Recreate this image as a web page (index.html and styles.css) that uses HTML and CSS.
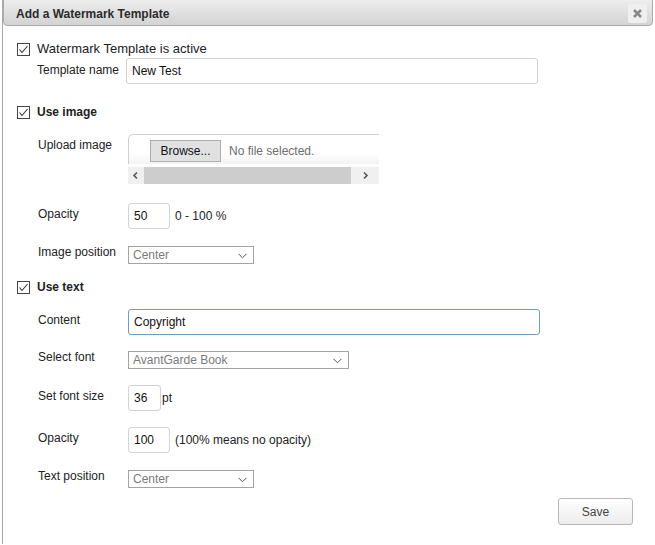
FILE: index.html
```html
<!DOCTYPE html>
<html>
<head>
<meta charset="utf-8">
<link rel="stylesheet" href="styles.css">
</head>
<body>
<div class="dialog">
  <div class="titlebar">
    <span class="title">Add a Watermark Template</span>
    <span class="close"><svg viewBox="0 0 19 19" width="19" height="19"><path d="M6 6 L13 13 M13 6 L6 13" stroke="#8a8a8a" stroke-width="2.6" stroke-linecap="butt"/></svg></span>
  </div>
  <div class="content">
    <div class="check-row first">
      <span class="cb"><svg viewBox="0 0 13 13" width="13" height="13"><path d="M2.5 6.5 L5 9.5 L10.5 3" fill="none" stroke="#333" stroke-width="1.1"/></svg></span>
      <span class="big">Watermark Template is active</span>
    </div>
    <div class="row tight">
      <span class="lbl name-lbl">Template name</span>
      <span class="input wide name-input">New Test</span>
    </div>

    <div class="check-row section">
      <span class="cb"><svg viewBox="0 0 13 13" width="13" height="13"><path d="M2.5 6.5 L5 9.5 L10.5 3" fill="none" stroke="#333" stroke-width="1.1"/></svg></span>
      <span class="bold">Use image</span>
    </div>
    <div class="row upload-row">
      <span class="lbl pad-in">Upload image</span>
      <div class="file-wrap">
        <div class="file-box">
          <span class="browse">Browse...</span>
          <span class="nofile">No file selected.</span>
        </div>
        <div class="hscroll">
          <svg class="arr" viewBox="0 0 16 17" width="16" height="17"><path d="M9 5.5 L6 8.5 L9 11.5" fill="none" stroke="#555" stroke-width="1.6"/></svg>
          <span class="thumb"></span>
          <svg class="arr right" viewBox="0 0 28 17" width="28" height="17"><path d="M13 5.5 L16 8.5 L13 11.5" fill="none" stroke="#555" stroke-width="1.6"/></svg>
        </div>
      </div>
    </div>
    <div class="row after-upload">
      <span class="lbl pad-in">Opacity</span>
      <span class="input num">50</span>
      <span class="hint">0 - 100 %</span>
    </div>
    <div class="row gap16">
      <span class="lbl">Image position</span>
      <span class="select short">Center<svg class="chev" viewBox="0 0 9 6" width="9" height="6"><path d="M0.5 0.8 L4.5 4.8 L8.5 0.8" fill="none" stroke="#555" stroke-width="1"/></svg></span>
    </div>

    <div class="check-row">
      <span class="cb"><svg viewBox="0 0 13 13" width="13" height="13"><path d="M2.5 6.5 L5 9.5 L10.5 3" fill="none" stroke="#333" stroke-width="1.1"/></svg></span>
      <span class="bold">Use text</span>
    </div>
    <div class="row">
      <span class="lbl pad-in">Content</span>
      <span class="input wide focus">Copyright</span>
    </div>
    <div class="row">
      <span class="lbl">Select font</span>
      <span class="select long">AvantGarde Book<svg class="chev" viewBox="0 0 9 6" width="9" height="6"><path d="M0.5 0.8 L4.5 4.8 L8.5 0.8" fill="none" stroke="#555" stroke-width="1"/></svg></span>
    </div>
    <div class="row gap16">
      <span class="lbl pad-in">Set font size</span>
      <span class="input small">36</span>
      <span class="hint unit">pt</span>
    </div>
    <div class="row gap16">
      <span class="lbl pad-in">Opacity</span>
      <span class="input num">100</span>
      <span class="hint">(100% means no opacity)</span>
    </div>
    <div class="row gap16">
      <span class="lbl">Text position</span>
      <span class="select short">Center<svg class="chev" viewBox="0 0 9 6" width="9" height="6"><path d="M0.5 0.8 L4.5 4.8 L8.5 0.8" fill="none" stroke="#555" stroke-width="1"/></svg></span>
    </div>
    <div class="actions">
      <span class="btn">Save</span>
    </div>
  </div>
</div>
</body>
</html>
```

FILE: styles.css
```css
html, body {
  margin: 0;
  padding: 0;
  background: #fff;
}
body {
  font-family: "Liberation Sans", Arial, sans-serif;
  font-size: 12px;
  color: #222;
}
.dialog {
  margin-left: 2px;
  width: 651px;
  height: 545px;
  border-left: 1px solid #a9a9a9;
  box-sizing: border-box;
}
.titlebar {
  height: 27px;
  box-sizing: border-box;
  margin-top: -1px;
  border: 1px solid #acacac;
  border-radius: 0 0 4px 4px;
  background: linear-gradient(#ededed, #d3d3d3);
  display: flex;
  align-items: center;
  justify-content: space-between;
  padding: 0 5px 0 12px;
}
.title {
  font-weight: bold;
  font-size: 12px;
  color: #2b2b2b;
  margin-top: 2px;
}
.close {
  width: 19px;
  height: 19px;
  box-sizing: border-box;
  border-radius: 2px;
  background: #efefef;
  display: block;
  margin-top: 1px;
}
.close svg { display: block; }
.content {
  padding: 16px 0 0 14px;
  display: flex;
  flex-direction: column;
}
.check-row {
  display: flex;
  align-items: center;
  height: 14px;
  line-height: 14px;
  margin-top: 16px;
}
.check-row.first { margin-top: 0; }
.check-row.section { margin-top: 21px; }
.big { font-size: 13px; }
.cb {
  width: 13px;
  height: 13px;
  box-sizing: border-box;
  border: 1px solid #444;
  background: #fff;
  margin-right: 7px;
  display: block;
  position: relative;
}
.cb svg {
  position: absolute;
  left: -1px;
  top: -1px;
}
.bold { font-weight: bold; }
.row {
  display: flex;
  align-items: flex-start;
  margin-top: 15px;
  line-height: 14px;
}
.row.gap16 { margin-top: 16px; }
.row.tight { margin-top: 2px; }
.row.upload-row { margin-top: 15px; }
.row.after-upload { margin-top: 19px; }
.lbl {
  width: 90px;
  padding-left: 21px;
  flex: none;
}
.lbl.name-lbl {
  padding-left: 20px;
  width: 90px;
  padding-top: 5px;
}
.lbl.pad-in { padding-top: 4px; }
.input {
  height: 26px;
  box-sizing: border-box;
  border: 1px solid #d2d2d2;
  border-radius: 3px;
  padding: 0 5px;
  display: flex;
  align-items: center;
  color: #111;
  font-size: 12px;
  background: #fff;
}
.input.wide { width: 412px; }
.input.name-input { margin-left: -1px; }
.input.focus { border-color: #6e9cc2; }
.input.num { width: 42px; }
.input.small { width: 33px; }
.hint {
  margin-left: 5px;
  padding-top: 6px;
}
.hint.unit { margin-left: 1px; }
.select {
  margin-top: 1px;
  height: 18px;
  box-sizing: border-box;
  border: 1px solid #a3a3a3;
  padding: 0 4px;
  display: flex;
  align-items: center;
  justify-content: space-between;
  color: #7a7a7a;
  background: #fff;
}
.select.short { width: 126px; }
.select.long { width: 221px; }
.chev { margin-right: 2px; margin-top: 1px; }
.file-wrap {
  width: 251px;
  display: flex;
  flex-direction: column;
}
.file-box {
  height: 30px;
  box-sizing: border-box;
  border-top: 1px solid #cfcfcf;
  border-left: 1px solid #cfcfcf;
  border-top-left-radius: 5px;
  background: linear-gradient(#fff 60%, #f3f3f3);
  display: flex;
  align-items: flex-start;
  padding: 5px 0 0 21px;
}
.browse {
  width: 71px;
  height: 22px;
  box-sizing: border-box;
  border: 1px solid #adadad;
  background: #e1e1e1;
  display: flex;
  align-items: center;
  justify-content: center;
  color: #111;
}
.nofile {
  margin-left: 8px;
  color: #6d6d6d;
  line-height: 22px;
}
.hscroll {
  margin-top: 3px;
  height: 17px;
  background: #f0f0f0;
  display: flex;
  align-items: center;
}
.arr { display: block; flex: none; }
.arr.right { margin-left: auto; }
.thumb {
  width: 207px;
  height: 17px;
  background: #cdcdcd;
}
.actions {
  display: flex;
  justify-content: flex-end;
  margin-top: 10px;
  padding-right: 20px;
}
.btn {
  width: 75px;
  height: 27px;
  box-sizing: border-box;
  border: 1px solid #b8b8b8;
  border-radius: 3px;
  background: linear-gradient(#fff, #ececec);
  display: flex;
  align-items: center;
  justify-content: center;
  color: #444;
}
```
